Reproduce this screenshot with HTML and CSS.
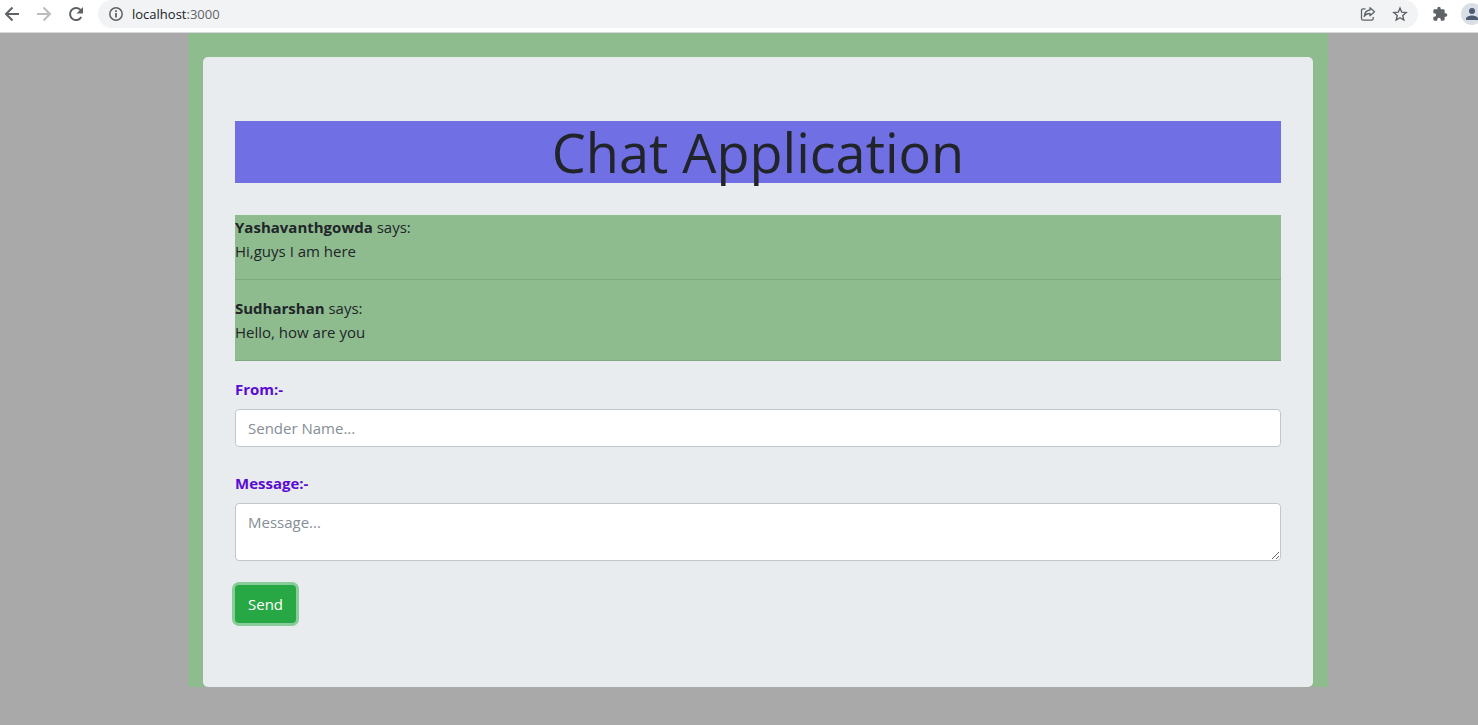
FILE: index.html
```html
<!DOCTYPE html>
<html lang="en">
<head>
<meta charset="utf-8">
<meta name="viewport" content="width=device-width, initial-scale=1">
<title>Chat Application</title>
<link rel="stylesheet" href="styles.css">
</head>
<body>
<header class="toolbar">
  <button class="tool" type="button" aria-label="Back">
    <svg width="16" height="16" viewBox="0 0 16 16" fill="none" stroke="#5f6368" stroke-width="2"><path d="M15 8H2.500M8.500 1.500L2 8l6.500 6.500"/></svg>
  </button>
  <button class="tool" type="button" aria-label="Forward">
    <svg width="16" height="16" viewBox="0 0 16 16" fill="none" stroke="#babcbe" stroke-width="2"><path d="M1 8h12.500M7.500 1.500L14 8l-6.500 6.500"/></svg>
  </button>
  <button class="tool" type="button" aria-label="Reload">
    <svg width="16" height="16" viewBox="0 0 16 16"><path d="M13.300 11A6 6 0 1 1 12.300 3.800L14 5.500" fill="none" stroke="#5f6368" stroke-width="2"/><path d="M15 1v6.500H8.500z" fill="#5f6368"/></svg>
  </button>
  <div class="omnibox">
    <svg width="16" height="16" viewBox="0 0 16 16"><circle cx="8" cy="8" r="6.200" fill="none" stroke="#5f6368" stroke-width="1.500"/><path d="M7.100 7h1.800v4.500H7.100zM7.100 4.300h1.800v1.700H7.100z" fill="#5f6368"/></svg>
    <span class="url"><span class="host">localhost</span>:3000</span>
    <button class="tool" type="button" aria-label="Share">
      <svg width="16" height="16" viewBox="0 0 16 16" fill="none" stroke="#5f6368" stroke-width="1.300" stroke-linejoin="round"><path d="M5.500 2.800H3.200Q1.500 2.800 1.500 4.500v8q0 1.700 1.700 1.700h8.300q1.700 0 1.700-1.700V11"/><path d="M10 1.700L14.500 5.700 10 9.700V7.500C7.200 7.500 5.400 8.400 4.200 10.500 4.500 7 6.300 4.400 10 4z"/></svg>
    </button>
    <button class="tool" type="button" aria-label="Bookmark this page">
      <svg width="16" height="16" viewBox="0 0 16 16" fill="none" stroke="#5f6368" stroke-width="1.400"><path d="M8 2l1.700 4.200 4.500.400-3.400 3 1 4.400L8 11.700 4.200 14l1-4.400-3.400-3 4.500-.400z"/></svg>
    </button>
  </div>
  <button class="tool" type="button" aria-label="Extensions">
    <svg width="16" height="16" viewBox="0 0 24 24" fill="#5f6368"><path d="M20.500 11H19V7c0-1.100-.900-2-2-2h-4V3.500a2.500 2.500 0 0 0-5 0V5H4c-1.100 0-2 .900-2 2v3.800h1.500a2.700 2.700 0 0 1 0 5.400H2V20c0 1.100.900 2 2 2h3.800v-1.500a2.700 2.700 0 0 1 5.400 0V22H17c1.100 0 2-.900 2-2v-4h1.500a2.500 2.500 0 0 0 0-5z"/></svg>
  </button>
  <button class="tool avatar" type="button" aria-label="Profile">
    <svg width="22" height="22" viewBox="0 0 22 22"><circle cx="11" cy="11" r="11" fill="#dadfe6"/><circle cx="11" cy="8" r="3" fill="#4d5b75"/><path d="M5 17v-1.500c0-2 4-3 6-3s6 1 6 3V17z" fill="#4d5b75"/></svg>
  </button>
</header>
<main class="page">
  <div class="container">
    <section class="jumbotron">
      <h1 class="title">Chat Application</h1>
      <div class="messages">
        <p class="message"><strong>Yashavanthgowda</strong> says:<br>Hi,guys I am here</p>
        <p class="message"><strong>Sudharshan</strong> says:<br>Hello, how are you</p>
      </div>
      <form class="form">
        <div class="field">
          <label for="sender">From:-</label>
          <input id="sender" class="control" type="text" placeholder="Sender Name...">
        </div>
        <div class="field">
          <label for="message">Message:-</label>
          <textarea id="message" class="control area" placeholder="Message..."></textarea>
        </div>
        <button class="send" type="button">Send</button>
      </form>
    </section>
  </div>
</main>
</body>
</html>
```
FILE: styles.css
```css
* {
  box-sizing: border-box;
}

body {
  margin: 0;
  min-height: 100vh;
  overflow-x: hidden;
  background: #a9a9a9;
  color: #212529;
  font-family: "Segoe UI", "Open Sans", "Noto Sans", sans-serif;
  font-size: 15px;
  line-height: 24px;
}

.toolbar {
  display: flex;
  align-items: center;
  gap: 16px;
  width: calc(100% + 5px);
  height: 33px;
  padding: 0 0 4px 4px;
  background: #fff;
  border-bottom: 1px solid #d5d7da;
}

.tool {
  display: flex;
  flex: none;
  padding: 0;
  border: 0;
  background: none;
}

.omnibox {
  display: flex;
  flex: 1;
  align-items: center;
  height: 28px;
  gap: 16px;
  margin: 0 -2px;
  padding: 0 10px;
  border-radius: 14px;
  background: #f1f3f4;
}

.url {
  flex: 1;
  margin-left: -8px;
  color: #5f6368;
  font-size: 13px;
}

.host {
  color: #202124;
}

.avatar {
  margin-left: -3px;
}

.page {
  padding-left: 38px;
}

.container {
  max-width: 1140px;
  margin: 0 auto;
  padding: 24px 15px 0;
  background: #8fbc8f;
}

.jumbotron {
  padding: 64px 32px;
  border-radius: 5px;
  background: #e9ecef;
}

.title {
  margin: 0 0 32px;
  background: #7070e4;
  font-size: 54px;
  font-weight: 400;
  line-height: 62px;
  text-align: center;
}

.messages {
  display: grid;
  gap: 16px;
  background: #8fbc8f;
}

.message {
  margin: 0;
  padding-bottom: 16px;
  border-bottom: 1px solid #80a980;
}

.form {
  padding-top: 16px;
}

.field {
  display: grid;
  gap: 8px;
  margin-bottom: 24px;
}

.field label {
  color: #5a0bd3;
  font-weight: 700;
}

.control {
  width: 100%;
  height: 38px;
  margin: 0;
  padding: 6px 12px;
  border: 1px solid #c3c7cc;
  border-radius: 4px;
  background: #fff;
  color: #495057;
  font: inherit;
}

.control::placeholder {
  color: #868e96;
  opacity: 1;
}

.area {
  height: 58px;
  resize: vertical;
}

.send {
  display: block;
  padding: 7px 13px;
  border: 0;
  border-radius: 4px;
  background: #28a745;
  box-shadow: 0 0 0 3px #88cc9a;
  color: #fff;
  font: inherit;
}
```
